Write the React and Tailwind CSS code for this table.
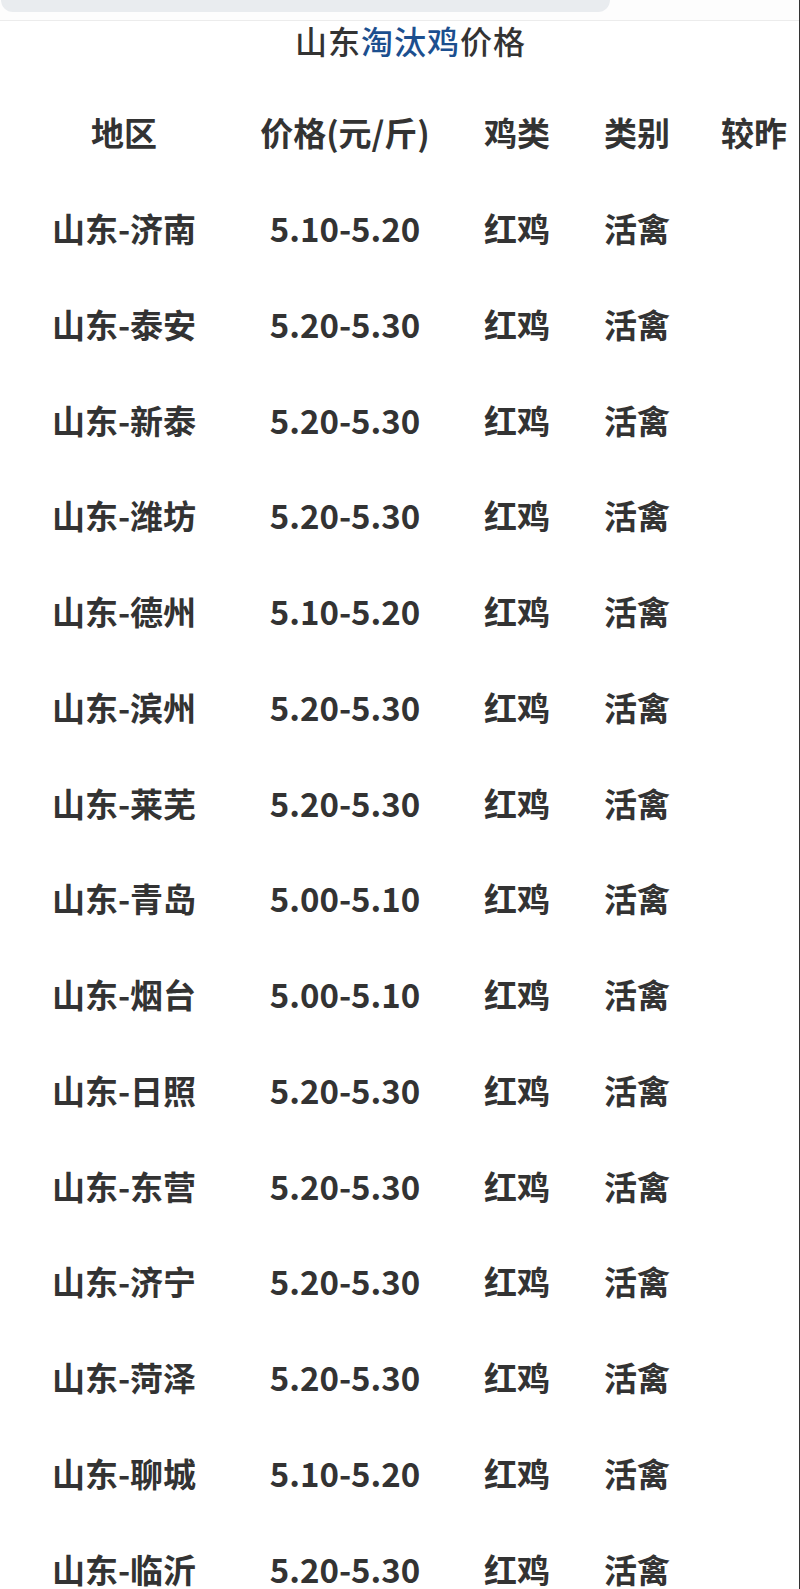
import React from "react";

const rows = [
  ["济南", "5.10-5.20"],
  ["泰安", "5.20-5.30"],
  ["新泰", "5.20-5.30"],
  ["潍坊", "5.20-5.30"],
  ["德州", "5.10-5.20"],
  ["滨州", "5.20-5.30"],
  ["莱芜", "5.20-5.30"],
  ["青岛", "5.00-5.10"],
  ["烟台", "5.00-5.10"],
  ["日照", "5.20-5.30"],
  ["东营", "5.20-5.30"],
  ["济宁", "5.20-5.30"],
  ["菏泽", "5.20-5.30"],
  ["聊城", "5.10-5.20"],
  ["临沂", "5.20-5.30"],
];

const Row = ({ cells }) => (
  <div className="flex h-[95.75px] items-center">
    <div className="w-[248px] flex justify-center">{cells[0]}</div>
    <div className="w-[194px] flex justify-center">{cells[1]}</div>
    <div className="w-[150px] flex justify-center">{cells[2]}</div>
    <div className="w-[90px] flex justify-center">{cells[3]}</div>
    <div className="flex-1 pl-[39px]">{cells[4]}</div>
  </div>
);

const App = () => {
  return (
    <div
      className="w-[800px] h-[1589px] overflow-hidden bg-white text-[#333] border-r border-[#333]"
      style={{ fontFamily: '"Noto Sans CJK SC", "Noto Sans", sans-serif' }}
    >
      {/* top search bar remnant */}
      <div className="h-[21px] border-b border-[#ececec] bg-[#fdfdfd]">
        <div className="ml-[1px] w-[609px] h-[12px] bg-[#e9ecef] rounded-b-[14px]" />
      </div>

      {/* title */}
      <div className="h-[38px] flex items-center justify-center pl-[22px] text-[32px] font-medium tracking-[1px] leading-none">
        山东<span className="text-[#1c4f8f]">淘汰鸡</span>价格
      </div>

      {/* table */}
      <div className="mt-[26px] text-[33px] font-semibold leading-none">
        <Row cells={["地区", "价格(元/斤)", "鸡类", "类别", "较昨"]} />
        {rows.map(([city, price]) => (
          <Row key={city} cells={["山东-" + city, price, "红鸡", "活禽", ""]} />
        ))}
      </div>
    </div>
  );
};

export default App;
